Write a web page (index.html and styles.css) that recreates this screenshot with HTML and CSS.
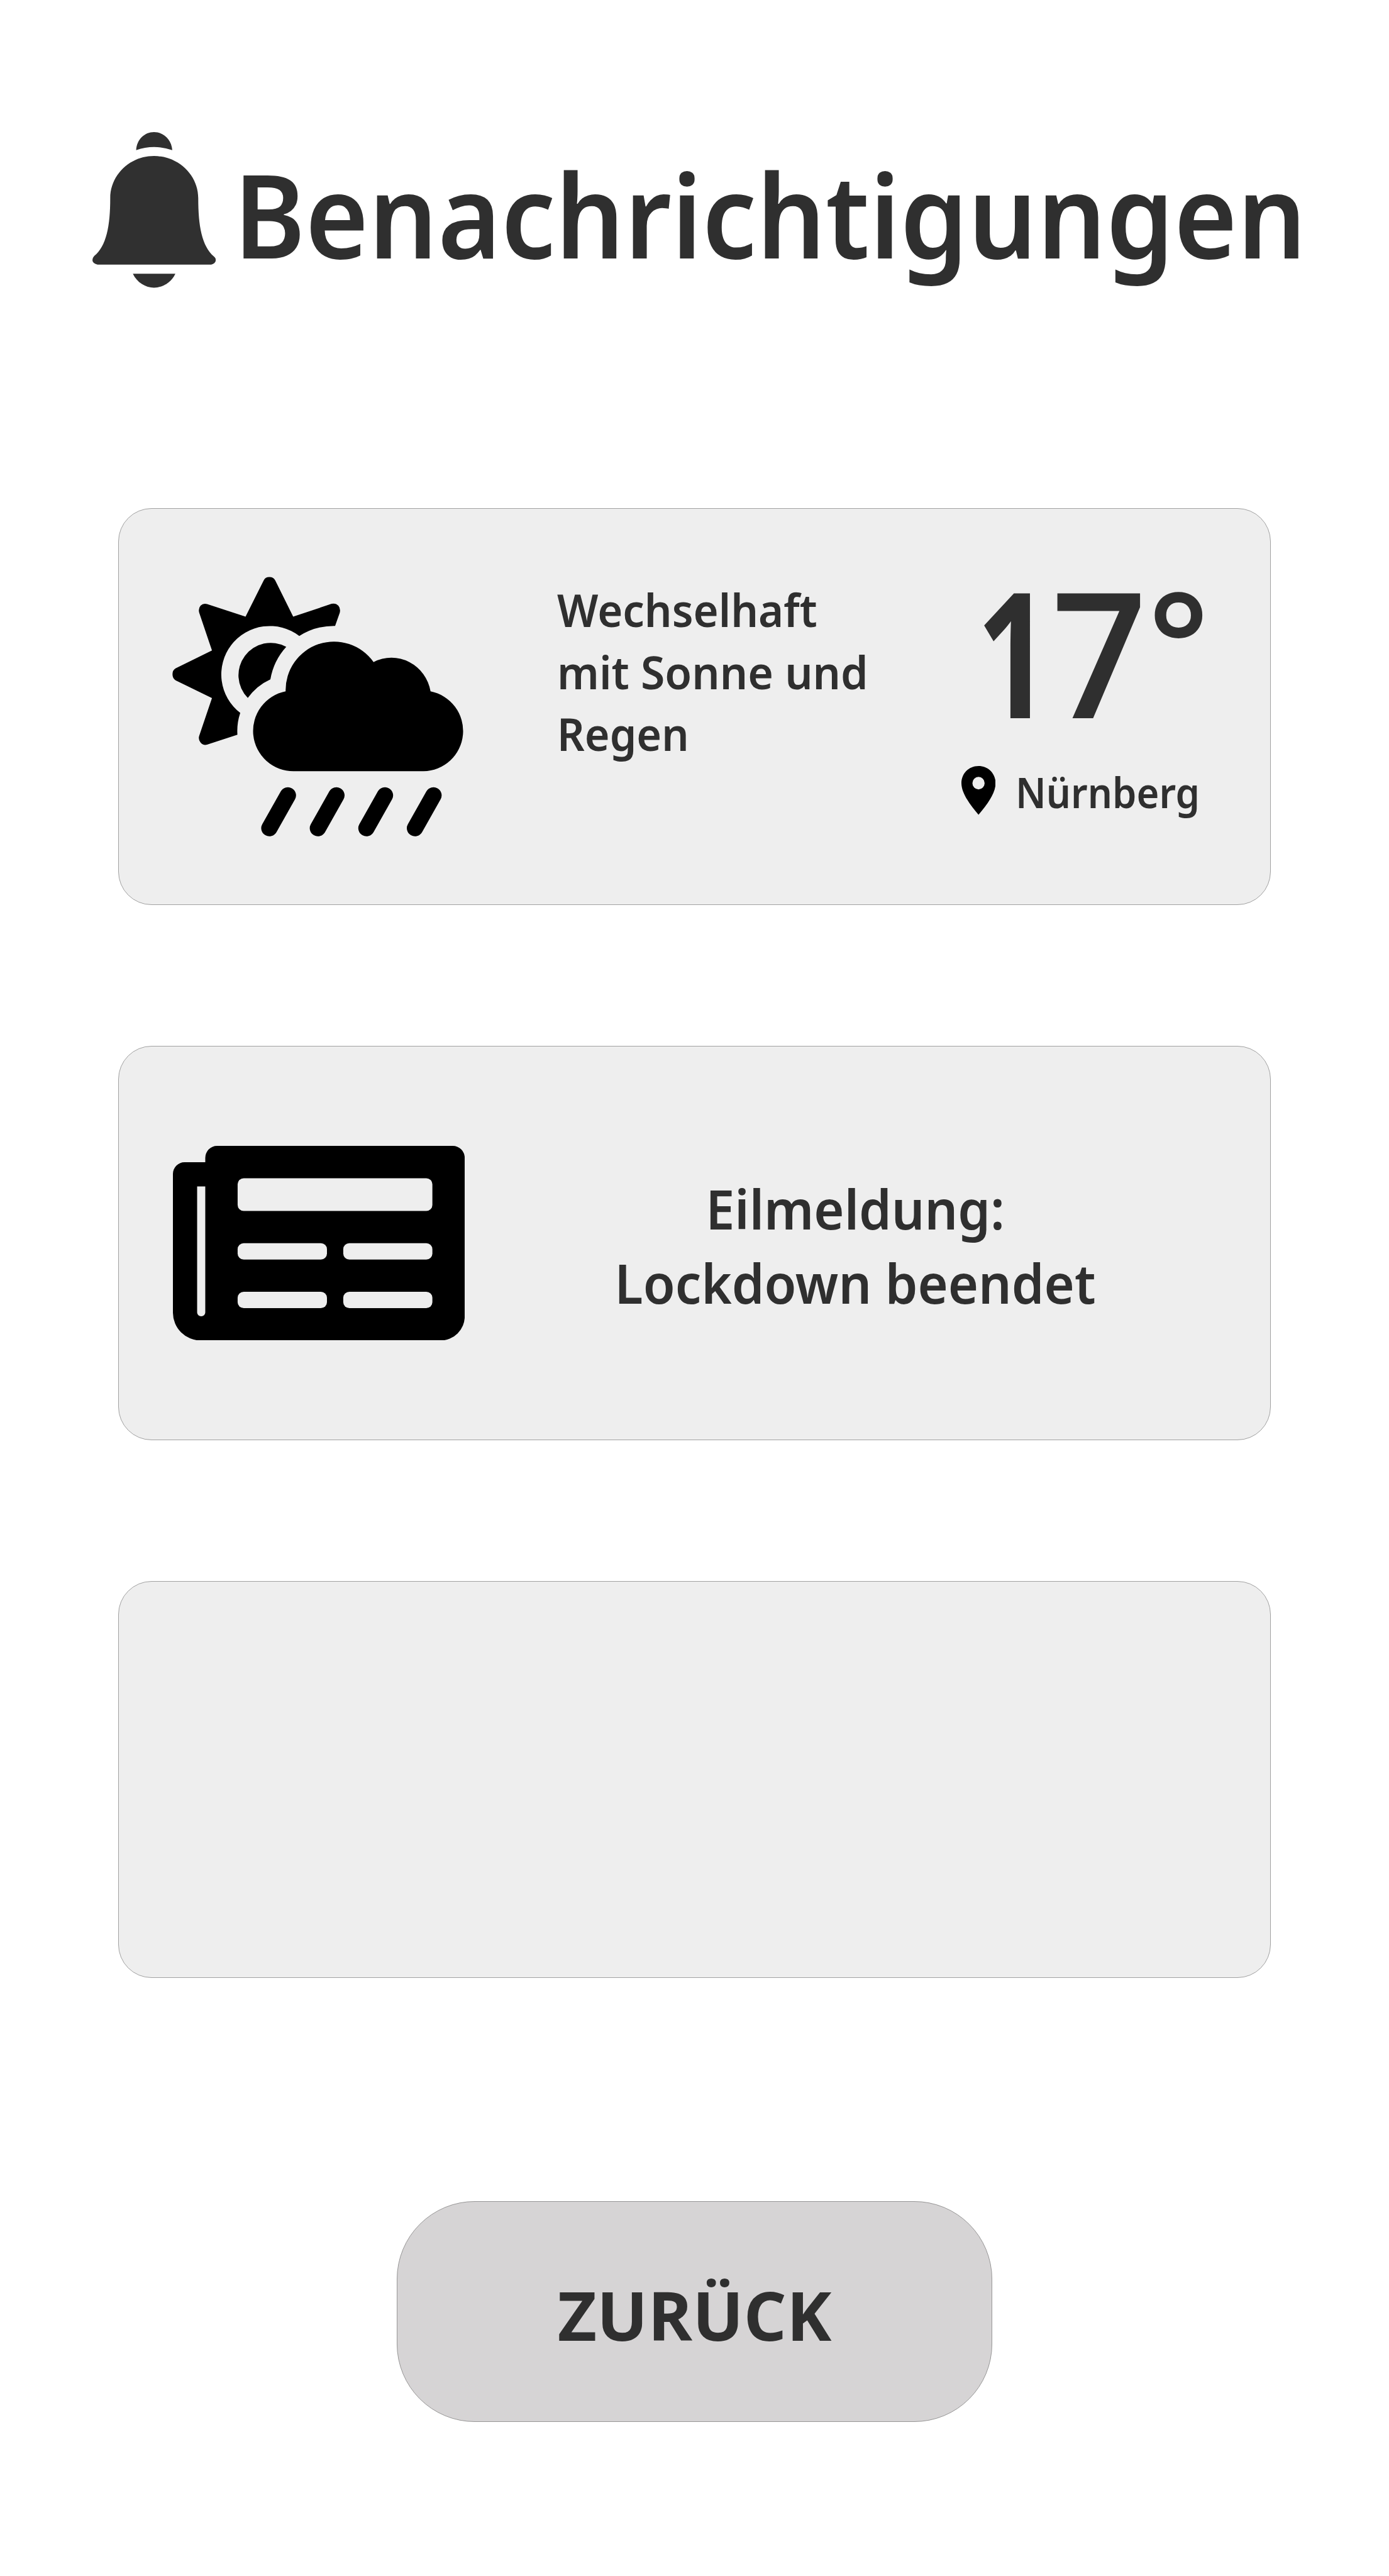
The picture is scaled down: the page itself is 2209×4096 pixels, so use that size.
FILE: index.html
```html
<!DOCTYPE html>
<html lang="de">
<head>
<meta charset="utf-8">
<title>Benachrichtigungen</title>
<link rel="stylesheet" href="styles.css">
</head>
<body>
<header class="header">
  <svg class="bell" viewBox="50 94 485 1170" preserveAspectRatio="none" aria-hidden="true">
    <path d="M222 230C224 150 255 94 292 94S361 150 364 230Q292 183 222 230Z"/>
    <path d="M292 274C390 274 466 420 466 590C466 800 480 950 528 1030Q535 1040 535 1056Q535 1080 517 1091H70Q50 1080 50 1056Q50 1040 57 1026C105 950 120 800 120 590C120 420 195 274 292 274Z"/>
    <path d="M209 1159H376C360 1225 325 1264 292 1264S225 1225 209 1159Z"/>
  </svg>
  <h1 class="title">Benachrichtigungen</h1>
</header>

<main class="cards">
  <section class="card weather">
    <svg class="weather-icon" viewBox="63 96 1433 1379" preserveAspectRatio="none" aria-hidden="true">
      <path d="M540 98Q560 98 569 116L657 308L846 240Q866 235 879 250Q891 265 886 287L863 357A318 343 0 0 0 687 411A238 257 0 0 0 397 819A278 300 0 0 0 383 935L234 988Q215 994 201 975Q190 960 195 942L258 741L79 646Q64 636 64 614Q64 593 79 583L258 488L195 286Q190 265 202 250Q215 235 234 241L423 308L512 116Q520 98 540 98Z"/>
      <path d="M434 740A159 172 0 0 1 623 468A318 343 0 0 0 545 641A278 300 0 0 0 434 740Z"/>
      <path d="M620 705A238 257.6 0 0 1 1052 549A195 215 0 0 1 1332 705A198 214 0 0 1 1297 1129H660A198 214 0 0 1 620 705Z"/>
      <g class="rain" transform="scale(1 1.081)">
        <path d="M631 1163L540 1324M869.5 1163L778.5 1324M1108 1163L1017 1324M1346.500 1163L1255.500 1324"/>
      </g>
    </svg>
    <p class="forecast">
      <span class="line line-a">Wechselhaft</span>
      <span class="line line-b">mit Sonne und</span>
      <span class="line line-c">Regen</span>
    </p>
    <div class="current">
      <div class="temperature"><span class="one">1</span><span class="seven">7</span><span class="degree">°</span></div>
      <div class="place">
        <svg class="pin" viewBox="117 1153 168 282" preserveAspectRatio="none" aria-hidden="true">
          <path fill-rule="evenodd" d="M201 1153C250 1153 285 1198 285 1252C285 1312 240 1380 201 1435C162 1380 117 1312 117 1252C117 1198 152 1153 201 1153ZM201 1216A30 36 0 0 0 201 1288A30 36 0 0 0 201 1216Z"/>
        </svg>
        <span class="city">Nürnberg</span>
      </div>
    </div>
  </section>

  <section class="card news">
    <svg class="news-icon" viewBox="64 88 1434 1366" preserveAspectRatio="none" aria-hidden="true">
      <path d="M281 88H1439A59 84 0 0 1 1498 172V1284A119 170 0 0 1 1379 1454H200A137 195 0 0 1 64 1260V285A57 82 0 0 1 121 203H223V172A58 84 0 0 1 281 88Z"/>
      <g class="cutout">
        <path d="M183 373V1258A20 26 0 0 0 223 1258V373Z"/>
        <rect x="382" y="315" width="957" height="230" rx="30" ry="42"/>
        <rect x="382" y="771" width="439" height="115" rx="30" ry="42"/>
        <rect x="901" y="771" width="438" height="115" rx="30" ry="42"/>
        <rect x="382" y="1112" width="439" height="115" rx="30" ry="42"/>
        <rect x="901" y="1112" width="438" height="115" rx="30" ry="42"/>
      </g>
    </svg>
    <p class="headline">Eilmeldung:<br>Lockdown beendet</p>
  </section>

  <section class="card"></section>
</main>

<button class="back" type="button">ZURÜCK</button>
</body>
</html>
```
FILE: styles.css
```css
* { box-sizing: border-box; }

body {
  margin: 0;
  width: 2209px;
  height: 4096px;
  background: #fff;
  color: #2f2f2f;
  font-family: "Noto Sans", "Open Sans", sans-serif;
  font-weight: 600;
}

p, h1 { margin: 0; }
svg { display: block; flex: none; }

.header {
  display: flex;
  align-items: flex-start;
  height: 808px;
  padding-left: 147.1px;
}

.bell {
  width: 196.2px;
  height: 247.4px;
  margin-top: 210.2px;
  fill: #303030;
}

.title {
  margin: 248.3px 0 0 28.3px;
  font-size: 184px;
  line-height: 184px;
  font-weight: 600;
  white-space: nowrap;
  transform: scaleX(.936);
  transform-origin: left;
}

.cards {
  display: flex;
  flex-direction: column;
  gap: 224px;
  width: 1833px;
  margin-left: 188px;
}

.card {
  display: flex;
  align-items: flex-start;
  height: 631px;
  border: 1px solid #a1a1a1;
  border-radius: 53px;
  background: #eee;
}

.weather-icon {
  width: 463.8px;
  height: 412.9px;
  margin: 107.9px 0 0 85.1px;
}

.rain {
  fill: none;
  stroke: #000;
  stroke-width: 80;
  stroke-linecap: round;
}

.forecast {
  width: 520px;
  margin: 111.4px 0 0 148.4px;
  font-size: 72.9px;
  line-height: 98.35px;
}

.line {
  display: block;
  white-space: nowrap;
  transform-origin: left;
}
.line-a { transform: scaleX(.943); }
.line-b { transform: scaleX(.956); }
.line-c { transform: scaleX(.935); }

.current { margin: 86px 0 0 122.4px; }

.temperature {
  height: 278px;
  padding-left: 24.3px;
  font-family: "Open Sans", "Noto Sans", sans-serif;
  font-size: 278px;
  line-height: 278px;
  white-space: nowrap;
}
.temperature span {
  display: inline-block;
  transform-origin: left;
}
.one { width: 118.9px; font-weight: 700; transform: scaleX(.74); }
.seven { width: 153.6px; transform: scaleX(.957); }
.degree {
  width: 97px;
  font-size: 228px;
  line-height: 226px;
  vertical-align: 34.7px;
}

.place {
  display: flex;
  align-items: flex-start;
  margin-top: 45.1px;
}
.pin { width: 54.4px; height: 77.6px; }
.city {
  margin: .9px 0 0 32.3px;
  font-size: 66px;
  line-height: 80px;
  transform: scaleX(.932);
  transform-origin: left;
}

.news { height: 627px; }
.news-icon {
  width: 464.1px;
  height: 309.5px;
  margin: 157.6px 0 0 85.5px;
}
.cutout { fill: #eee; }

.headline {
  width: 820px;
  margin: 197.8px 0 0 211.7px;
  font-size: 87px;
  line-height: 118px;
  text-align: center;
  transform: scaleX(.95);
}

.back {
  display: flex;
  align-items: center;
  justify-content: center;
  width: 947px;
  height: 351px;
  margin: 355px 0 0 631px;
  padding: 8px 0 0;
  border: 1px solid #979696;
  border-radius: 124px;
  background: #d6d4d5;
  color: inherit;
  font: 700 107.5px/108px "Open Sans", "Noto Sans", sans-serif;
}
```
